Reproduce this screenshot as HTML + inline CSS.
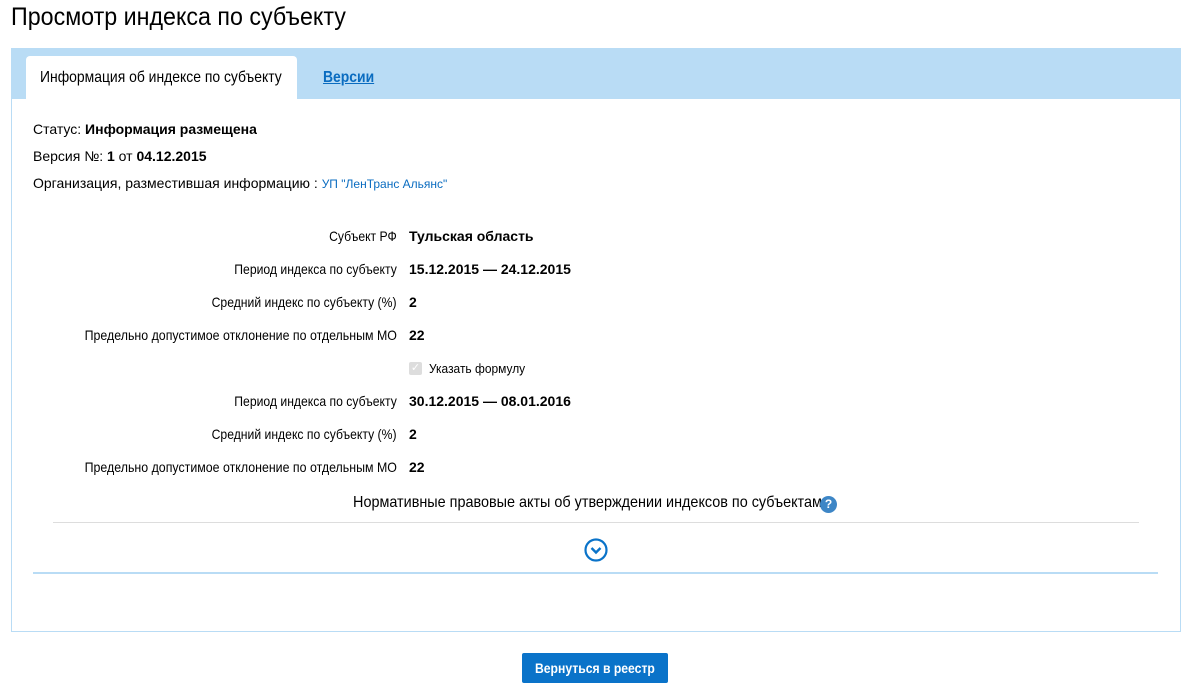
<!DOCTYPE html>
<html><head><meta charset="utf-8"><style>
body{margin:0;width:1190px;height:693px;background:#fff;font-family:"Liberation Sans",sans-serif;color:#000;position:relative;overflow:hidden}
.a{position:absolute;white-space:nowrap}
.c{display:inline-block;transform:scaleX(.87)}
.r{transform-origin:right center}
.l{transform-origin:left center}
.m{transform-origin:center center}
.lab{right:793px;font-size:14px;text-align:right}
.val{left:409px;font-size:14px;font-weight:bold}
</style></head><body>
<div class="a" style="left:11px;top:3px;font-size:25px"><span class="c l" style="transform:scaleX(.93)">Просмотр индекса по субъекту</span></div>
<div class="a" style="left:11px;top:48px;width:1168px;height:582px;border:1px solid #b9dcf5"></div>
<div class="a" style="left:12px;top:49px;width:1168px;height:50px;background:#b9dcf5"></div>
<div class="a" style="left:26px;top:56px;width:271px;height:43px;background:#fff;border-radius:4px 4px 0 0"></div>
<div class="a" style="left:40px;top:69px;font-size:16px"><span class="c l">Информация об индексе по субъекту</span></div>
<div class="a" style="left:323px;top:69px;font-size:16px;color:#0a6cc0;font-weight:bold"><span class="c l" style="text-decoration:underline">Версии</span></div>
<div class="a" style="left:33px;top:121px;font-size:14px">Статус: <b>Информация размещена</b></div>
<div class="a" style="left:33px;top:148px;font-size:14px">Версия №: <b>1</b> от <b>04.12.2015</b></div>
<div class="a" style="left:33px;top:175px;font-size:14px">Организация, разместившая информацию : <span style="font-size:12px;color:#0a6cc0">УП "ЛенТранс Альянс"</span></div>

<div class="a lab" style="top:228px"><span class="c r">Субъект РФ</span></div>
<div class="a val" style="top:228px">Тульская область</div>
<div class="a lab" style="top:261px"><span class="c r">Период индекса по субъекту</span></div>
<div class="a val" style="top:261px">15.12.2015 — 24.12.2015</div>
<div class="a lab" style="top:294px"><span class="c r">Средний индекс по субъекту (%)</span></div>
<div class="a val" style="top:294px">2</div>
<div class="a lab" style="top:327px"><span class="c r" style="transform:scaleX(.885)">Предельно допустимое отклонение по отдельным МО</span></div>
<div class="a val" style="top:327px">22</div>
<div class="a" style="left:409px;top:362px;width:13px;height:13px;background:#ddd;border-radius:2px;color:#fff;font-size:11px;line-height:13px;text-align:center">✓</div>
<div class="a" style="left:429px;top:361px;font-size:13px"><span class="c l" style="transform:scaleX(.92)">Указать формулу</span></div>
<div class="a lab" style="top:393px"><span class="c r">Период индекса по субъекту</span></div>
<div class="a val" style="top:393px">30.12.2015 — 08.01.2016</div>
<div class="a lab" style="top:426px"><span class="c r">Средний индекс по субъекту (%)</span></div>
<div class="a val" style="top:426px">2</div>
<div class="a lab" style="top:459px"><span class="c r" style="transform:scaleX(.885)">Предельно допустимое отклонение по отдельным МО</span></div>
<div class="a val" style="top:459px">22</div>

<div class="a" style="left:287px;width:600px;text-align:center;top:494px;font-size:16px"><span class="c m" style="transform:scaleX(.9)">Нормативные правовые акты об утверждении индексов по субъектам</span></div>
<div class="a" style="left:820px;top:496px;width:17px;height:17px;border-radius:50%;background:#3d86c6;color:#fff;font-size:12px;font-weight:bold;line-height:17px;text-align:center">?</div>
<div class="a" style="left:53px;top:522px;width:1086px;height:1px;background:#ddd"></div>
<svg class="a" style="left:584px;top:538px" width="24" height="24" viewBox="0 0 24 24"><circle cx="12" cy="12" r="10.5" fill="none" stroke="#0a73c9" stroke-width="2.2"/><path d="M7.5 10 L12 14.5 L16.5 10" fill="none" stroke="#0a73c9" stroke-width="2.4"/></svg>
<div class="a" style="left:33px;top:572px;width:1125px;height:2px;background:#b9dcf5"></div>
<div class="a" style="left:522px;top:653px;width:146px;height:30px;background:#0a73c9;border-radius:2px;color:#fff;font-size:14px;font-weight:bold;line-height:30px;text-align:center"><span class="c m">Вернуться в реестр</span></div>
</body></html>
